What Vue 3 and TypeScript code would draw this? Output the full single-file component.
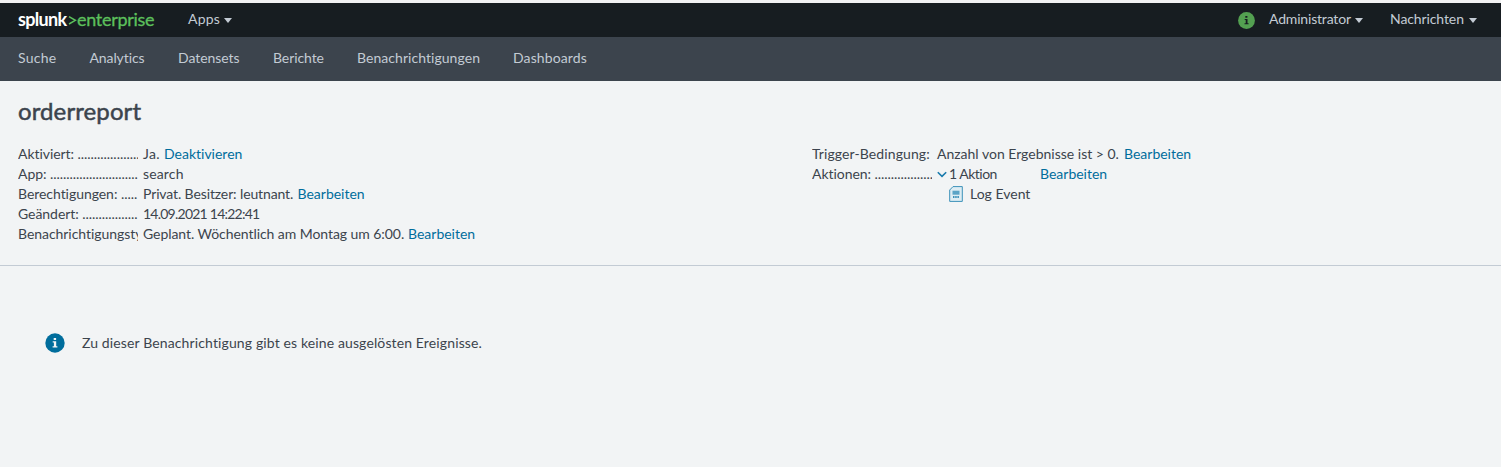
<script setup lang="ts">
interface Entry { text: string; width: number; spacing: number }
const nav: Entry[] = [
  { text: 'Suche', width: 38.5, spacing: 0.25 },
  { text: 'Analytics', width: 55.5, spacing: -0.1 },
  { text: 'Datensets', width: 62, spacing: -0.05 },
  { text: 'Berichte', width: 51, spacing: -0.08 },
  { text: 'Benachrichtigungen', width: 123, spacing: 0.05 },
  { text: 'Dashboards', width: 74, spacing: 0.12 },
]
interface Detail { label: string; dots: number; value: string; link?: string; valueWidth: number; spacing: number }
const details: Detail[] = [
  { label: 'Aktiviert:', dots: 19, value: 'Ja.', link: 'Deaktivieren', valueWidth: 21, spacing: 0.3 },
  { label: 'App:', dots: 27, value: 'search', valueWidth: 41, spacing: 0.15 },
  { label: 'Berechtigungen:', dots: 5, value: 'Privat. Besitzer: leutnant.', link: 'Bearbeiten', valueWidth: 154.5, spacing: -0.12 },
  { label: 'Geändert:', dots: 17, value: '14.09.2021 14:22:41', valueWidth: 117, spacing: -0.76 },
  { label: 'Benachrichtigungstyp:', dots: 0, value: 'Geplant. Wöchentlich am Montag um 6:00.', link: 'Bearbeiten', valueWidth: 265, spacing: -0.06 },
]
</script>

<template>
  <div class="page">
    <header class="topbar">
      <div class="brand"><b>splunk</b><svg class="chev" viewBox="0 0 9 11"><path d="M1 1.6 7.4 5.3 1 9" /></svg><span>enterprise</span></div>
      <div class="menu apps"><span>Apps</span><i class="caret" /></div>
      <div class="right">
        <svg class="health" viewBox="0 0 17 17"><circle cx="8.5" cy="8.5" r="8.4" /><path d="M7.3 3.9h2.1v1.8H7.3zM6.7 6.9h2.8v4.3h1.1v1.1H6.5v-1.1h1.2V8h-1z" /></svg>
        <div class="menu admin"><span>Administrator</span><i class="caret" /></div>
        <div class="menu messages"><span>Nachrichten</span><i class="caret" /></div>
      </div>
    </header>
    <nav class="nav">
      <a v-for="n in nav" :key="n.text" :style="{ width: n.width + 'px', letterSpacing: n.spacing + 'px' }">{{ n.text }}</a>
    </nav>
    <main>
      <h1>orderreport</h1>
      <section class="summary">
        <dl class="left">
          <div v-for="d in details" :key="d.label" class="row">
            <dt>{{ d.label }} <span v-if="d.dots" class="dots">{{ '.'.repeat(d.dots) }}</span></dt>
            <dd><span class="value" :style="{ width: d.valueWidth + 'px', letterSpacing: d.spacing + 'px' }">{{ d.value }}</span><a v-if="d.link">{{ d.link }}</a></dd>
          </div>
        </dl>
        <dl class="trigger">
          <div class="row">
            <dt class="cond">Trigger-Bedingung:</dt>
            <dd><span class="result">Anzahl von Ergebnisse ist &gt; 0.</span><a>Bearbeiten</a></dd>
          </div>
          <div class="row">
            <dt>Aktionen: <span class="dots">{{ '.'.repeat(18) }}</span></dt>
            <dd><svg class="expand" viewBox="0 0 10 7"><path d="m.8 1.2 4.2 4.2 4.2-4.2" /></svg><span class="count">1 Aktion</span><a>Bearbeiten</a></dd>
          </div>
          <div class="row log">
            <svg viewBox="0 0 14 16"><path class="sheet" d="M4 .6h9.3v14.8H.7V4z" /><path class="band" d="M3.5 6.7h7" /><path class="lines" d="M4 10.9h6" /></svg>
            <span>Log Event</span>
          </div>
        </dl>
      </section>
      <div class="notice">
        <svg viewBox="0 0 20 20"><circle cx="10" cy="10" r="9.7" /><path d="M8.7 5h2.4v2.1H8.7zM7.7 8.3h3.5v4.9h1.2v1.4H7.6v-1.4h1.3V9.6H7.7z" /></svg>
        <span>Zu dieser Benachrichtigung gibt es keine ausgelösten Ereignisse.</span>
      </div>
    </main>
  </div>
</template>

<style>
body { margin: 0; background: #f2f4f5; }
</style>
<style scoped>
.page { height: 467px; overflow: hidden; background: #f2f4f5; color: #3c444d; font: 14px/20px Lato, "Open Sans", sans-serif; font-variant-ligatures: none; white-space: nowrap; }
.topbar { display: flex; align-items: center; height: 34px; padding-left: 18px; border-top: 3px solid #f2f2f3; background: #171d21; color: #c3cbd4; }
.brand { display: flex; width: 170px; padding-bottom: 2px; font-size: 18px; color: #5cc05c; }
.brand b { width: 50px; color: #fff; letter-spacing: -.7px; }
.brand span { letter-spacing: -.3px; -webkit-text-stroke: .3px #5cc05c; }
.chev { width: 9px; height: 11px; margin-top: 6px; fill: none; stroke: #5cc05c; stroke-width: 1.5; }
.menu { display: flex; align-items: center; }
.menu span { padding-bottom: 2px; }
.caret { border: 4px solid transparent; border-top: 5px solid #c3cbd4; border-bottom: 0; }
.apps span { width: 36px; letter-spacing: .2px; }
.right { display: flex; align-items: center; margin-left: auto; padding-right: 24px; }
.health { width: 17px; height: 17px; margin-right: 14px; fill: #171d21; }
.health circle { fill: #53a051; }
.admin span { width: 86px; letter-spacing: -.18px; }
.messages { margin-left: 27px; }
.messages span { width: 79px; letter-spacing: -.1px; }
.nav { display: flex; align-items: center; gap: 33px; height: 42px; padding: 0 0 2px 18px; background: #3c444d; color: #c3cbd4; }
h1 { margin: 0; padding: 16px 0 2px 18px; font: 400 24px/28px Lato, "Open Sans", sans-serif; letter-spacing: .1px; -webkit-text-stroke: .5px #3c444d; }
.summary { display: flex; height: 121px; padding: 17px 18px 0; border-bottom: 1px solid #c3cbd4; }
dl, dd { margin: 0; }
.left { width: 794px; }
.row { display: flex; height: 20px; }
dt { width: 120px; margin-right: 5px; overflow: hidden; letter-spacing: -.05px; }
.cond { letter-spacing: .1px; }
dd { display: flex; }
a { color: #006d9c; }
.nav a { color: #c3cbd4; }
.result { width: 187px; }
.expand { width: 10px; height: 7px; margin: 7px 2px 0 0; fill: none; stroke: #1a7bad; stroke-width: 1.6; }
.count { width: 91px; letter-spacing: -.5px; }
.log { padding-left: 137px; }
.log svg { width: 14px; height: 16px; margin: 2px 7px 0 0; fill: none; stroke: #3c91b9; }
.log .sheet { fill: #deedf3; }
.log .band { stroke-width: 4; stroke: #5ba4c6; }
.log .lines { stroke-width: 2; stroke-dasharray: 1.5 .7; }
.notice { display: flex; align-items: center; padding: 67px 0 0 45px; }
.notice svg { width: 20px; height: 20px; margin-right: 17px; fill: #f2f4f5; }
.notice span { letter-spacing: .125px; }
.notice circle { fill: #006d9c; }
</style>
